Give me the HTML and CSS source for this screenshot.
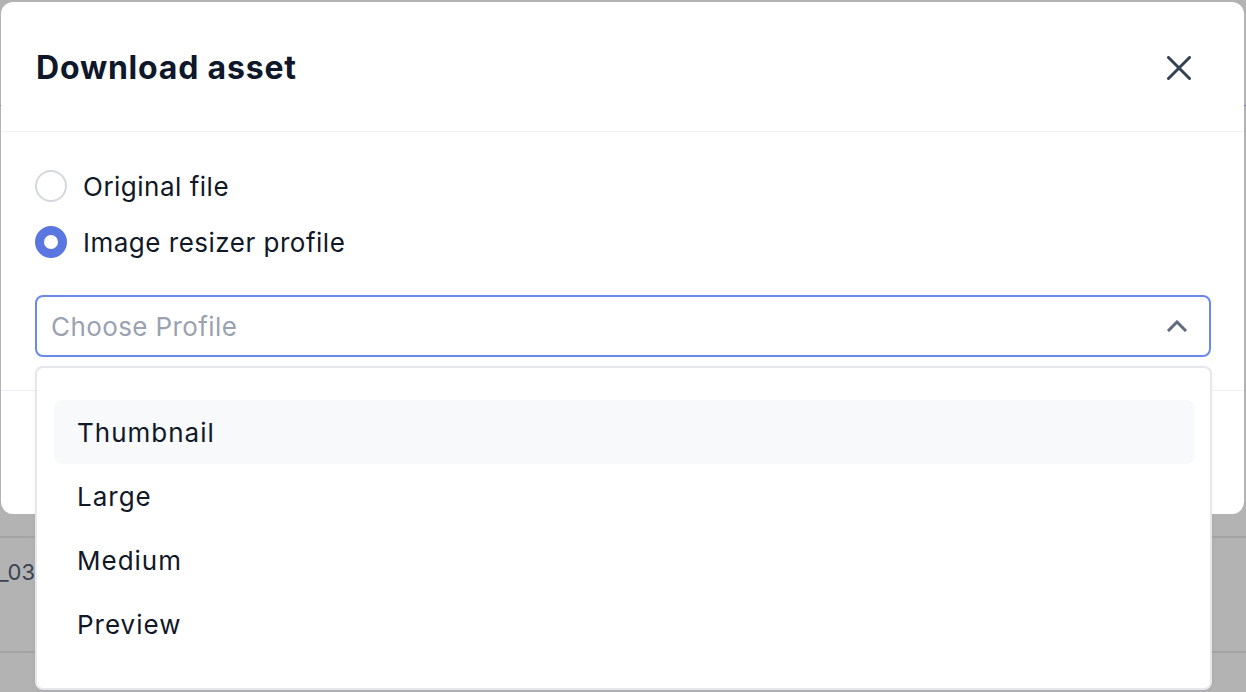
FILE: index.html
```html
<!DOCTYPE html>
<html lang="en">
<head>
<meta charset="utf-8">
<title>Download asset</title>
<link rel="stylesheet" href="styles.css">
</head>
<body>
<div class="backdrop">
  <div class="bg-top"></div>
  <div class="bg-line-blue"></div>
  <div class="bg-spacer"></div>
  <div class="bg-row">
    <div class="bg-cell">file_03</div>
  </div>
</div>

<div class="modal">
  <div class="modal-header">
    <h2 class="modal-title">Download asset</h2>
    <button class="close-btn" aria-label="Close">
      <svg width="24" height="24" viewBox="0 0 24 24"><path d="M1.5 1.5 L22.5 22.5 M22.5 1.5 L1.5 22.5" stroke="#334155" stroke-width="3" stroke-linecap="round" fill="none"/></svg>
    </button>
  </div>
  <div class="modal-body">
    <label class="radio-row">
      <span class="radio"></span>
      <span class="radio-label">Original file</span>
    </label>
    <label class="radio-row">
      <span class="radio radio-checked"></span>
      <span class="radio-label">Image resizer profile</span>
    </label>
    <div class="select-wrap">
      <div class="select">
        <span class="placeholder">Choose Profile</span>
        <svg class="chevron" width="20" height="12" viewBox="0 0 20 12"><path d="M2 10 L10 2 L18 10" stroke="#5f6b7d" stroke-width="3" fill="none" stroke-linecap="square"/></svg>
      </div>
      <div class="dropdown">
        <div class="option option-active">Thumbnail</div>
        <div class="option">Large</div>
        <div class="option">Medium</div>
        <div class="option">Preview</div>
      </div>
    </div>
  </div>
  <div class="modal-footer"></div>
</div>
</body>
</html>
```

FILE: styles.css
```css
html, body {
  margin: 0;
  padding: 0;
}
body {
  width: 1246px;
  height: 692px;
  overflow: hidden;
  background: #b3b3b3;
  font-family: "Inter", "Liberation Sans", sans-serif;
  position: relative;
}
.backdrop {
  display: flex;
  flex-direction: column;
}
.bg-top {
  height: 105px;
}
.bg-line-blue {
  height: 1px;
  background: #6f82d6;
}
.bg-spacer {
  height: 430px;
}
.bg-row {
  border-top: 2px solid #a4a4a4;
  border-bottom: 2px solid #a4a4a4;
  height: 113px;
  display: flex;
  align-items: flex-start;
}
.bg-cell {
  width: 35px;
  overflow: hidden;
  white-space: nowrap;
  direction: rtl;
  text-align: left;
  color: #3a4352;
  font-size: 22px;
  line-height: 26px;
  margin-top: 21px;
}

.modal {
  position: absolute;
  left: 1px;
  top: 2px;
  width: 1243px;
  height: 512px;
  background: #fff;
  border-radius: 12px;
  display: flex;
  flex-direction: column;
}
.modal-header {
  height: 130px;
  border-bottom: 1px solid #eef0f4;
  display: flex;
  align-items: center;
  justify-content: space-between;
  padding: 2px 53px 0 35px;
  box-sizing: border-box;
  flex-shrink: 0;
}
.modal-title {
  margin: 0;
  font-size: 32px;
  font-weight: 700;
  color: #0f172a;
  letter-spacing: 0.8px;
}
.close-btn {
  border: none;
  background: none;
  padding: 0;
  width: 24px;
  height: 24px;
  display: flex;
}
.modal-body {
  padding: 38px 33px 33px 34px;
  border-bottom: 1px solid #eef0f4;
  display: flex;
  flex-direction: column;
  gap: 24px;
}
.radio-row {
  display: flex;
  align-items: center;
  gap: 16px;
  height: 32px;
}
.radio {
  width: 32px;
  height: 32px;
  box-sizing: border-box;
  border-radius: 50%;
  border: 2px solid #d4d8de;
  background: #fff;
  flex-shrink: 0;
}
.radio-checked {
  border: 9px solid #5a76e0;
}
.radio-label {
  font-size: 26px;
  letter-spacing: 0.5px;
  color: #111827;
}
.select-wrap {
  position: relative;
  margin-top: 13px;
}
.select {
  height: 62px;
  box-sizing: border-box;
  border: 2px solid #6a8aea;
  border-radius: 8px;
  display: flex;
  align-items: center;
  justify-content: space-between;
  padding: 0 22px 0 14px;
}
.placeholder {
  font-size: 26px;
  letter-spacing: 0.4px;
  color: #9aa2b1;
}
.chevron {
  display: block;
}
.dropdown {
  position: absolute;
  left: 0;
  right: -1px;
  top: 71px;
  height: 324px;
  box-sizing: border-box;
  background: #fff;
  border: 2px solid #e6e7ec;
  border-radius: 8px;
  padding: 32px 15px 0 17px;
  display: flex;
  flex-direction: column;
  box-shadow: 0 2px 6px rgba(0,0,0,0.04);
}
.option {
  height: 64px;
  display: flex;
  align-items: center;
  padding-left: 23px;
  border-radius: 8px;
  font-size: 26px;
  letter-spacing: 1px;
  color: #111827;
}
.option-active {
  background: #f8f9fb;
}
.modal-footer {
  flex: 1;
}
```
